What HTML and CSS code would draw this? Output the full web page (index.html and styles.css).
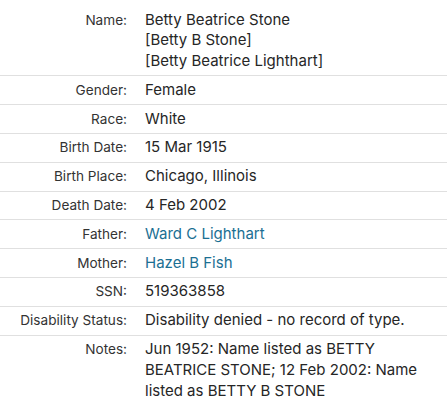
FILE: index.html
```html
<!DOCTYPE html>
<html>
<head>
<meta charset="utf-8">
<link rel="stylesheet" href="styles.css">
</head>
<body>
<table class="record">
  <tbody>
    <tr class="row first"><th>Name:</th><td>Betty Beatrice Stone<br>[Betty B Stone]<br>[Betty Beatrice Lighthart]</td></tr>
    <tr class="row"><th>Gender:</th><td>Female</td></tr>
    <tr class="row"><th>Race:</th><td>White</td></tr>
    <tr class="row"><th>Birth Date:</th><td>15 Mar 1915</td></tr>
    <tr class="row"><th>Birth Place:</th><td>Chicago, Illinois</td></tr>
    <tr class="row"><th>Death Date:</th><td>4 Feb 2002</td></tr>
    <tr class="row"><th>Father:</th><td><a class="link" href="#">Ward C Lighthart</a></td></tr>
    <tr class="row"><th>Mother:</th><td><a class="link" href="#">Hazel B Fish</a></td></tr>
    <tr class="row"><th>SSN:</th><td>519363858</td></tr>
    <tr class="row"><th>Disability Status:</th><td>Disability denied - no record of type.</td></tr>
    <tr class="row last"><th>Notes:</th><td>Jun 1952: Name listed as BETTY BEATRICE STONE; 12 Feb 2002: Name listed as BETTY B STONE</td></tr>
  </tbody>
</table>
</body>
</html>
```
FILE: styles.css
```css
html, body {
  margin: 0;
  padding: 0;
  background: #fff;
}
body {
  font-family: Inter, "Noto Sans", sans-serif;
  color: #333;
}
.record {
  width: 447px;
  border-collapse: collapse;
  margin-top: 6px;
}
.row th,
.row td {
  padding: 3.5px 0;
  line-height: 20.8px;
  vertical-align: top;
  border-bottom: 1px solid #e0e0e0;
}
.row.last th,
.row.last td {
  border-bottom: none;
}
.row th {
  width: 127px;
  text-align: right;
  font-weight: 400;
  font-size: 13.6px;
  color: #333;
  padding-right: 18px;
  white-space: nowrap;
}
.row td {
  font-size: 15px;
  color: #262626;
  padding-right: 8px;
}
.link {
  color: #1b6f93;
  text-decoration: none;
}
```
